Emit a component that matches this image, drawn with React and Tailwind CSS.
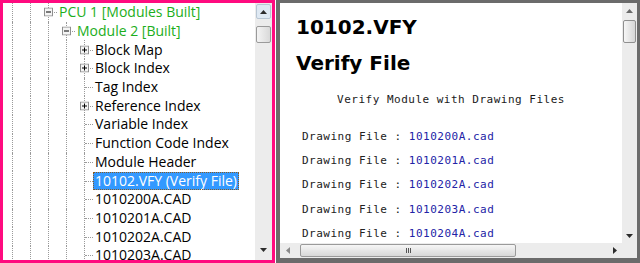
import React from 'react';

const treeRows = [
  { depth: 2, box: 'minus', label: 'PCU 1 [Modules Built]', green: true },
  { depth: 3, box: 'minus', label: 'Module 2 [Built]', green: true },
  { depth: 4, box: 'plus', label: 'Block Map' },
  { depth: 4, box: 'plus', label: 'Block Index' },
  { depth: 4, label: 'Tag Index' },
  { depth: 4, box: 'plus', label: 'Reference Index' },
  { depth: 4, label: 'Variable Index' },
  { depth: 4, label: 'Function Code Index' },
  { depth: 4, label: 'Module Header' },
  { depth: 4, label: '10102.VFY (Verify File)', selected: true },
  { depth: 4, label: '1010200A.CAD' },
  { depth: 4, label: '1010201A.CAD' },
  { depth: 4, label: '1010202A.CAD' },
  { depth: 4, label: '1010203A.CAD' },
];

const drawingFiles = ['1010200A.cad', '1010201A.cad', '1010202A.cad', '1010203A.cad', '1010204A.cad'];

function Guide() {
  return (
    <div className="flex h-full w-[18px] shrink-0">
      <div className="w-[9px]" />
      <div className="h-full border-l border-dotted border-[#9a9a9a]" />
    </div>
  );
}

function ExpandBox({ kind }) {
  return (
    <svg width="9" height="9" viewBox="0 0 9 9" className="absolute left-[5px] top-1/2 -translate-y-1/2">
      <rect x="0.5" y="0.5" width="8" height="8" fill="#f4f4f4" stroke="#8f8f8f" />
      <line x1="2" y1="4.5" x2="7" y2="4.5" stroke="#000" />
      {kind === 'plus' && <line x1="4.5" y1="2" x2="4.5" y2="7" stroke="#000" />}
    </svg>
  );
}

function NodeColumn({ box }) {
  return (
    <div className="relative flex h-full w-[18px] shrink-0">
      <div className="w-[9px]" />
      <div className="h-full border-l border-dotted border-[#9a9a9a]" />
      <div className="absolute left-[10px] right-0 top-1/2 border-t border-dotted border-[#9a9a9a]" />
      {box && <ExpandBox kind={box} />}
    </div>
  );
}

function TreeRow({ row }) {
  const guides = Array.from({ length: row.depth });
  return (
    <div className="flex h-[18.7px] items-center">
      {guides.map((_, i) => (
        <Guide key={i} />
      ))}
      <NodeColumn box={row.box} />
      <span
        className={
          'whitespace-nowrap px-[2px] leading-[18px] ' +
          (row.selected
            ? 'bg-[#3399ff] text-white outline outline-1 outline-dotted outline-[#8a5a20] -outline-offset-1'
            : row.green
            ? 'text-[#1cae1c]'
            : 'text-black')
        }
      >
        {row.label}
      </span>
    </div>
  );
}

function Arrow({ dir, color = '#4a4a4a' }) {
  const pts = {
    up: '0,4 3.5,0 7,4',
    down: '0,0 3.5,4 7,0',
    left: '4,0 0,3.5 4,7',
    right: '0,0 4,3.5 0,7',
  }[dir];
  const size = dir === 'up' || dir === 'down' ? { w: 7, h: 4 } : { w: 4, h: 7 };
  return (
    <svg width={size.w} height={size.h} viewBox={`0 0 ${size.w} ${size.h}`}>
      <polygon points={pts} fill={color} />
    </svg>
  );
}

function LeftScrollbar() {
  return (
    <div className="flex h-full w-[17px] shrink-0 flex-col bg-[#ececec]">
      <div className="m-[1px] flex h-[15px] items-center justify-center rounded-[2px] border border-[#b8c6d4] bg-[#dfe9f3]">
        <Arrow dir="up" color="#2c2c2c" />
      </div>
      <div className="mx-[1px] mt-[6px] h-[17px] rounded-[2px] border border-[#9a9a9a] bg-gradient-to-r from-[#f4f4f4] to-[#d9d9d9]" />
      <div className="flex-1" />
      <div className="mb-[3px] flex h-[15px] items-center justify-center">
        <Arrow dir="down" color="#2c2c2c" />
      </div>
    </div>
  );
}

function RightVScroll() {
  return (
    <div className="flex h-full w-[15px] shrink-0 flex-col bg-[#ececec]">
      <div className="flex h-[15px] items-center justify-center">
        <Arrow dir="up" color="#6a6a6a" />
      </div>
      <div className="mx-[1px] mt-[2px] h-[23px] rounded-[2px] border border-[#8f8f8f] bg-gradient-to-r from-[#f6f6f6] to-[#d6d6d6]" />
      <div className="flex-1" />
      <div className="flex h-[15px] items-center justify-center">
        <Arrow dir="down" color="#2c2c2c" />
      </div>
    </div>
  );
}

function RightHScroll() {
  return (
    <div className="flex h-[15px] shrink-0 bg-[#ececec]">
      <div className="flex w-[15px] items-center justify-center">
        <Arrow dir="left" color="#8a8a8a" />
      </div>
      <div className="mt-[1px] ml-[5px] flex h-[13px] w-[216px] items-center justify-center rounded-[2px] border border-[#9a9a9a] bg-gradient-to-b from-[#f6f6f6] to-[#d8d8d8]">
        <div className="flex gap-[1px]">
          <div className="h-[5px] w-[1px] bg-[#555]" />
          <div className="h-[5px] w-[1px] bg-[#555]" />
          <div className="h-[5px] w-[1px] bg-[#555]" />
        </div>
      </div>
      <div className="flex-1" />
      <div className="flex w-[15px] items-center justify-center">
        <Arrow dir="right" color="#2c2c2c" />
      </div>
      <div className="w-[15px] bg-[#ececec]" />
    </div>
  );
}

export default function App() {
  return (
    <div className="flex h-[263px] w-[640px] overflow-hidden bg-white">
      {/* tree pane */}
      <div className="flex h-[263px] w-[275px] shrink-0 border-[3px] border-[#ff0a7f] bg-white">
        <div className="flex-1 overflow-hidden font-['Open_Sans',sans-serif] text-[14px]">
          {treeRows.map((row, i) => (
            <TreeRow key={i} row={row} />
          ))}
        </div>
        <LeftScrollbar />
      </div>

      <div className="w-[1px] shrink-0" />

      {/* document pane */}
      <div className="flex h-[263px] flex-1 flex-col border-[#6b6b6b] border-t-[3px] border-l-[4px] border-r-[3px] border-b-[5px]">
        <div className="flex min-h-0 flex-1">
          <div className="flex-1 overflow-hidden bg-white pt-[12px]">
            <div className="pl-[16px] font-['DejaVu_Sans',sans-serif] text-[20px] font-bold leading-[24px] text-black">
              10102.VFY
            </div>
            <div className="mt-[12px] pl-[16px] font-['DejaVu_Sans',sans-serif] text-[20px] font-bold leading-[24px] text-black">
              Verify File
            </div>
            <div className="font-['DejaVu_Sans_Mono',monospace] text-[11px] tracking-[0.5px]">
              <div className="mt-[17.5px] text-center leading-[14px] text-[#1a1a1a]">
                Verify Module with Drawing Files
              </div>
              <div className="mt-[18px] pl-[22px]">
                {drawingFiles.map((f) => (
                  <div key={f} className="h-[24.4px] whitespace-nowrap leading-[24.4px]">
                    <span className="text-[#222]">Drawing File : </span>
                    <span className="text-[#2323a6]">{f}</span>
                  </div>
                ))}
              </div>
            </div>
          </div>
          <RightVScroll />
        </div>
        <RightHScroll />
      </div>
    </div>
  );
}
